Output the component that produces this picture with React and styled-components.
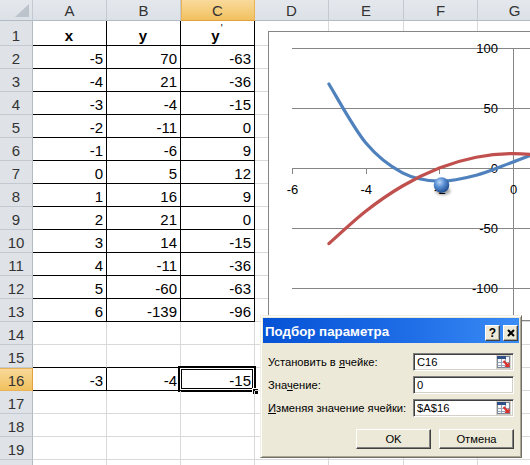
import React from 'react';
import styled, { createGlobalStyle } from 'styled-components';

const GlobalStyle = createGlobalStyle`
  html, body { margin: 0; padding: 0; background: #fff; overflow: hidden; }
  body { font-family: "Liberation Sans", Arial, sans-serif; }
  #root { width: 530px; height: 465px; }
`;

const Sheet = styled.div`
  position: relative;
  width: 530px;
  height: 465px;
  overflow: hidden;
  background: #fff;
`;

const Grid = styled.div`
  display: grid;
  grid-template-columns: 33px 74px 74px 74px 74px 75px 74px 74px;
  grid-template-rows: 21px 25px repeat(19, 23px);
  width: 552px;
`;

const Corner = styled.div`
  box-sizing: border-box;
  display: flex;
  justify-content: flex-end;
  align-items: flex-end;
  padding: 0 3px 3px 0;
  background: linear-gradient(#E4E8ED, #DCE1E7);
  border-right: 1px solid #C3C9D1;
  border-bottom: 1px solid #B2BAC4;
`;

const CornerMark = styled.div`
  width: 0;
  height: 0;
  border-left: 14px solid transparent;
  border-bottom: 13px solid #BCC3CB;
`;

const ColHead = styled.div`
  box-sizing: border-box;
  display: flex;
  align-items: center;
  justify-content: center;
  font-size: 15px;
  line-height: 17px;
  color: #333;
  background: ${p => (p.$active ? 'linear-gradient(#F9DA9C, #F1C15F)' : 'linear-gradient(#E4E8ED, #DCE1E7)')};
  border-right: 1px solid ${p => (p.$active ? '#E9B257' : '#C3C9D1')};
  border-bottom: 1px solid ${p => (p.$active ? '#E2A13E' : '#B2BAC4')};
  box-shadow: ${p => (p.$active ? 'inset 1px 0 #E9B257' : 'none')};
`;

const RowHead = styled.div`
  box-sizing: border-box;
  display: flex;
  align-items: flex-end;
  justify-content: center;
  padding-bottom: 1px;
  font-size: 15px;
  line-height: 17px;
  color: #333;
  background: ${p => (p.$active ? 'linear-gradient(#F9DA9C, #F1C15F)' : '#DFE3E8')};
  border-right: 1px solid ${p => (p.$active ? '#E2A13E' : '#B2BAC4')};
  border-bottom: 1px solid ${p => (p.$active ? '#E9B257' : '#C3C9D1')};
  box-shadow: ${p => (p.$active ? 'inset 0 1px #E9B257' : 'none')};
`;

const Cell = styled.div`
  box-sizing: border-box;
  position: relative;
  display: flex;
  align-items: flex-end;
  justify-content: ${p => (p.$center ? 'center' : 'flex-end')};
  padding: 0 3px 1px 2px;
  border-right: 1px solid ${p => (p.$br ? '#000' : '#D9D9D9')};
  border-bottom: 1px solid ${p => (p.$bb ? '#000' : '#D9D9D9')};
  font-size: 15px;
  line-height: 17px;
  color: #000;
  font-weight: ${p => (p.$bold ? 700 : 400)};
  white-space: nowrap;
`;

const Value = styled.span`
  display: inline-block;
`;

const Prime = styled.span`
  display: inline-block;
  font-size: 10px;
  font-weight: 400;
  line-height: 10px;
  vertical-align: top;
  margin-top: -3px;
  margin-left: 1px;
`;

const Selection = styled.div`
  position: absolute;
  left: -3px;
  top: -2px;
  right: -2px;
  bottom: -2px;
  border: 2px solid #000;
  box-shadow: inset 0 0 0 1px #fff, inset 0 0 0 2px #000;
  pointer-events: none;
`;

const FillHandle = styled.div`
  position: absolute;
  right: -5px;
  bottom: -5px;
  width: 5px;
  height: 5px;
  background: #000;
  border: 1px solid #fff;
`;

const Chart = styled.div`
  position: absolute;
  left: 268px;
  top: 31px;
  width: 300px;
  height: 290px;
  box-sizing: border-box;
  border: 1px solid #868686;
  background: #fff;
  overflow: hidden;
`;

const Dialog = styled.div`
  position: absolute;
  left: 260px;
  top: 315px;
  width: 262px;
  height: 143px;
  box-sizing: border-box;
  background: #ECE9D8;
  border: 1px solid;
  border-color: #F1EFE2 #716F64 #716F64 #F1EFE2;
  box-shadow: inset 1px 1px #fff, inset -1px -1px #ACA899;
  padding: 2px;
  display: flex;
  flex-direction: column;
  font-family: "Liberation Sans", Arial, sans-serif;
`;

const TitleBar = styled.div`
  height: 25px;
  display: flex;
  align-items: center;
  padding: 0 1px 0 2px;
  background: linear-gradient(to right, #0552D6, #1E6CE6 55%, #3A8CF6);
`;

const TitleText = styled.div`
  flex: 1;
  color: #fff;
  font-weight: 700;
  font-size: 13.3px;
  padding-top: 2px;
`;

const TitleButtons = styled.div`
  display: flex;
  gap: 3px;
  align-self: flex-end;
  margin-bottom: 2px;
`;

const TitleButton = styled.div`
  box-sizing: border-box;
  width: 15px;
  height: 16px;
  display: flex;
  align-items: center;
  justify-content: center;
  background: #ECE9D8;
  border: 1px solid;
  border-color: #fff #404040 #404040 #fff;
  box-shadow: inset -1px -1px #ACA899;
  font-weight: 700;
  font-size: 12px;
  color: #000;
`;

const Body = styled.div`
  display: flex;
  flex-direction: column;
  padding: 10px 5px 0 5px;
`;

const Fields = styled.div`
  display: flex;
  flex-direction: column;
  gap: 5px;
`;

const FieldRow = styled.div`
  display: flex;
  justify-content: space-between;
  align-items: center;
  height: 18px;
`;

const Label = styled.div`
  font-size: 11.2px;
  color: #000;
`;

const InputBox = styled.div`
  box-sizing: border-box;
  display: flex;
  align-items: center;
  width: 101px;
  height: 18px;
  background: #fff;
  border: 1px solid;
  border-color: #7F7F7F #fff #fff #7F7F7F;
  box-shadow: inset 1px 1px #404040, inset -1px -1px #D4D0C8;
  padding: 0 2px 0 3px;
  font-size: 11.2px;
  color: #000;
`;

const InputText = styled.span`
  flex: 1;
`;

const RefButton = styled.div`
  display: flex;
  width: 15px;
  height: 14px;
`;

const ButtonRow = styled.div`
  display: flex;
  justify-content: flex-end;
  gap: 8px;
  margin-top: 12px;
`;

const Button = styled.div`
  box-sizing: border-box;
  width: 75px;
  height: 20px;
  display: flex;
  align-items: center;
  justify-content: center;
  background: #ECE9D8;
  border: 1px solid;
  border-color: #fff #404040 #404040 #fff;
  box-shadow: inset -1px -1px #808080;
  font-size: 11.2px;
  color: #000;
`;

const xs = [-5, -4, -3, -2, -1, 0, 1, 2, 3, 4, 5, 6];
const ys = [70, 21, -4, -11, -6, 5, 16, 21, 14, -11, -60, -139];
const yd = [-63, -36, -15, 0, 9, 12, 9, 0, -15, -36, -63, -96];

const px = x => 513 + 36.83 * x;
const py = y => 168 - 1.2 * y;

function smoothPath(vals) {
  const pts = xs.map((x, i) => [px(x), py(vals[i])]);
  let d = `M${pts[0][0].toFixed(1)},${pts[0][1].toFixed(1)}`;
  for (let i = 0; i < pts.length - 1; i++) {
    const p0 = pts[i - 1] || pts[i];
    const p1 = pts[i];
    const p2 = pts[i + 1];
    const p3 = pts[i + 2] || p2;
    const c1 = [p1[0] + (p2[0] - p0[0]) / 6, p1[1] + (p2[1] - p0[1]) / 6];
    const c2 = [p2[0] - (p3[0] - p1[0]) / 6, p2[1] - (p3[1] - p1[1]) / 6];
    d += ` C${c1[0].toFixed(1)},${c1[1].toFixed(1)} ${c2[0].toFixed(1)},${c2[1].toFixed(1)} ${p2[0].toFixed(1)},${p2[1].toFixed(1)}`;
  }
  return d;
}

function ChartDrawing() {
  const grid = [100, 50, -50, -100];
  const yLabels = [100, 50, 0, -50, -100];
  const xTicks = [-6, -4, -2, 0];
  return (
    <svg width="298" height="288" viewBox="269 32 298 288" style={{ display: 'block' }}>
      <defs>
        <radialGradient id="ball" cx="38%" cy="32%" r="70%">
          <stop offset="0" stopColor="#B9D6F7" />
          <stop offset="0.45" stopColor="#5A8FD3" />
          <stop offset="1" stopColor="#1E4C8E" />
        </radialGradient>
        <filter id="blur" x="-50%" y="-50%" width="200%" height="200%">
          <feGaussianBlur stdDeviation="1.5" />
        </filter>
      </defs>
      {grid.map(v => (
        <line key={v} x1="292" x2="600" y1={py(v) + 0.5} y2={py(v) + 0.5} stroke="#868686" strokeWidth="1" />
      ))}
      <line x1="292" x2="600" y1="168.5" y2="168.5" stroke="#868686" strokeWidth="1" />
      {xTicks.map(t => (
        <line key={t} x1={Math.round(px(t)) + 0.5} x2={Math.round(px(t)) + 0.5} y1="168" y2="174" stroke="#868686" strokeWidth="1" />
      ))}
      <line x1="513.5" x2="513.5" y1="48" y2="330" stroke="#868686" strokeWidth="1" />
      {yLabels.map(v => (
        <text key={v} x="498" y={py(v) + 4.7} textAnchor="end" fontSize="13" fontFamily="Liberation Sans, Arial, sans-serif" fill="#000">
          {v}
        </text>
      ))}
      {xTicks.map(t => (
        <text key={t} x={px(t) + 0.5} y="193.7" textAnchor="middle" fontSize="13" fontFamily="Liberation Sans, Arial, sans-serif" fill="#000">
          {t}
        </text>
      ))}
      <path d={smoothPath(ys)} fill="none" stroke="#4F81BD" strokeWidth="3.2" strokeLinecap="round" />
      <path d={smoothPath(yd)} fill="none" stroke="#C0504D" strokeWidth="3.2" strokeLinecap="round" />
      <ellipse cx="443" cy="191" rx="7.5" ry="4" fill="#000" opacity="0.35" filter="url(#blur)" />
      <circle cx="441.5" cy="185" r="7.8" fill="url(#ball)" />
    </svg>
  );
}

function RefIcon() {
  return (
    <svg width="15" height="14" viewBox="0 0 15 14">
      <rect x="0" y="0" width="15" height="14" fill="#D4D0C8" />
      <rect x="1.5" y="1.5" width="12" height="11" fill="#F3F6FB" stroke="#7A8799" />
      <rect x="1" y="1" width="9" height="3" fill="#2F4E86" />
      <line x1="1.5" x2="13.5" y1="7.5" y2="7.5" stroke="#9AA6B8" />
      <line x1="1.5" x2="13.5" y1="10.5" y2="10.5" stroke="#9AA6B8" />
      <line x1="5.5" x2="5.5" y1="4" y2="12.5" stroke="#9AA6B8" />
      <line x1="9.5" x2="9.5" y1="4" y2="12.5" stroke="#9AA6B8" />
      <polygon points="13.5,12 8.5,12 10,10.3 6.8,6.8 8.3,5.3 11.7,8.7 13.5,7" fill="#E0302A" />
    </svg>
  );
}

function CloseGlyph() {
  return (
    <svg width="8" height="8" viewBox="0 0 8 8">
      <path d="M1 1 L7 7 M7 1 L1 7" stroke="#000" strokeWidth="2" />
    </svg>
  );
}

const cols = ['A', 'B', 'C', 'D', 'E', 'F', 'G'];

function content(r, c) {
  if (c > 2) return null;
  if (r === 1) {
    if (c === 0) return 'x';
    if (c === 1) return 'y';
    return (
      <Value>
        y<Prime>'</Prime>
      </Value>
    );
  }
  if (r >= 2 && r <= 13) {
    const i = r - 2;
    return [xs[i], ys[i], yd[i]][c];
  }
  if (r === 16) return [-3, -4, -15][c];
  return null;
}

export default function App() {
  const rows = Array.from({ length: 20 }, (_, i) => i + 1);
  return (
    <Sheet>
      <GlobalStyle />
      <Grid>
        <Corner>
          <CornerMark />
        </Corner>
        {cols.map(c => (
          <ColHead key={c} $active={c === 'C'}>
            {c}
          </ColHead>
        ))}
        {rows.map(r => (
          <React.Fragment key={r}>
            <RowHead $active={r === 16}>{r < 20 ? r : ''}</RowHead>
            {cols.map((c, ci) => {
              const inTable = ci <= 2 && r >= 1 && r <= 13;
              const inRow16 = ci <= 2 && r === 16;
              const br = inTable || inRow16;
              const bb = inTable || inRow16 || (ci <= 2 && r === 15);
              return (
                <Cell key={c} $br={br} $bb={bb} $bold={r === 1} $center={r === 1}>
                  {content(r, ci)}
                  {r === 16 && c === 'C' && (
                    <Selection>
                      <FillHandle />
                    </Selection>
                  )}
                </Cell>
              );
            })}
          </React.Fragment>
        ))}
      </Grid>

      <Chart>
        <ChartDrawing />
      </Chart>

      <Dialog>
        <TitleBar>
          <TitleText>Подбор параметра</TitleText>
          <TitleButtons>
            <TitleButton>?</TitleButton>
            <TitleButton>
              <CloseGlyph />
            </TitleButton>
          </TitleButtons>
        </TitleBar>
        <Body>
          <Fields>
            <FieldRow>
              <Label>
                Установить в <u>я</u>чейке:
              </Label>
              <InputBox>
                <InputText>C16</InputText>
                <RefButton>
                  <RefIcon />
                </RefButton>
              </InputBox>
            </FieldRow>
            <FieldRow>
              <Label>
                Зна<u>ч</u>ение:
              </Label>
              <InputBox>
                <InputText>0</InputText>
              </InputBox>
            </FieldRow>
            <FieldRow>
              <Label>
                <u>И</u>зменяя значение ячейки:
              </Label>
              <InputBox>
                <InputText>$A$16</InputText>
                <RefButton>
                  <RefIcon />
                </RefButton>
              </InputBox>
            </FieldRow>
          </Fields>
          <ButtonRow>
            <Button>OK</Button>
            <Button>Отмена</Button>
          </ButtonRow>
        </Body>
      </Dialog>
    </Sheet>
  );
}
